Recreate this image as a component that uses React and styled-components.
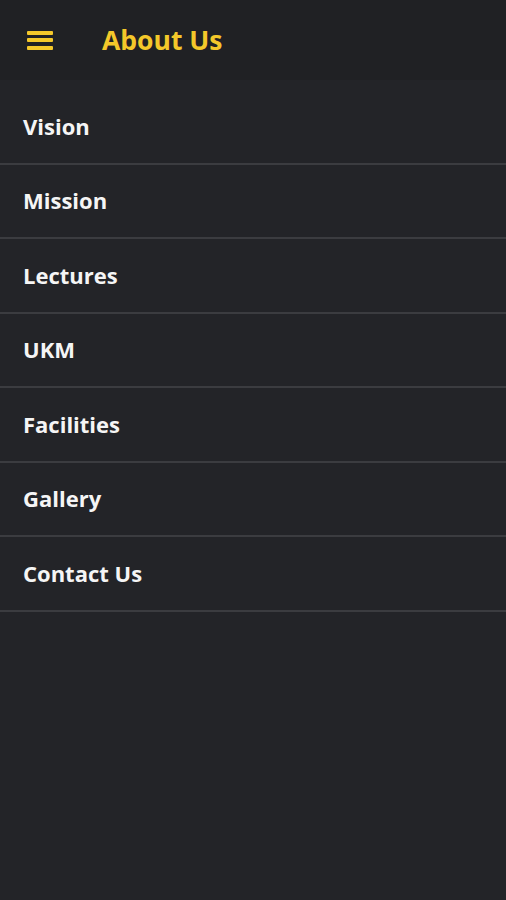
import React from 'react';
import styled, { createGlobalStyle } from 'styled-components';

const GlobalStyle = createGlobalStyle`
  html, body {
    margin: 0;
    padding: 0;
    background: #232428;
  }
  body {
    font-family: "Open Sans", Lato, "Liberation Sans", sans-serif;
  }
`;

const Page = styled.div`
  min-height: 900px;
  background: #232428;
`;

const Header = styled.header`
  display: flex;
  align-items: center;
  height: 80px;
  padding-left: 27px;
  background: #202124;
  box-sizing: border-box;
`;

const MenuButton = styled.button`
  display: flex;
  flex-direction: column;
  justify-content: space-between;
  width: 26px;
  height: 19px;
  padding: 0;
  border: none;
  background: none;
  margin-right: 49px;
`;

const Bar = styled.span`
  display: block;
  height: 4px;
  border-radius: 1px;
  background: #f4c82a;
`;

const Title = styled.h1`
  margin: 0;
  font-size: 26.5px;
  font-weight: 700;
  color: #f4c82a;
`;

const List = styled.ul`
  list-style: none;
  margin: 0;
  padding: 10px 0 0;
`;

const Row = styled.li`
  display: flex;
  align-items: center;
  height: 74.5px;
  padding-left: 23px;
  padding-bottom: 1px;
  border-bottom: 2px solid #3b3c40;
  box-sizing: border-box;
  font-size: 22px;
  font-weight: 700;
  color: #f5f5f5;
  font-variant-ligatures: none;
`;

const items = ['Vision', 'Mission', 'Lectures', 'UKM', 'Facilities', 'Gallery', 'Contact Us'];

function App() {
  return (
    <Page>
      <GlobalStyle />
      <Header>
        <MenuButton aria-label="menu">
          <Bar />
          <Bar />
          <Bar />
        </MenuButton>
        <Title>About Us</Title>
      </Header>
      <List>
        {items.map(item => (
          <Row key={item}>{item}</Row>
        ))}
      </List>
    </Page>
  );
}

export default App;
